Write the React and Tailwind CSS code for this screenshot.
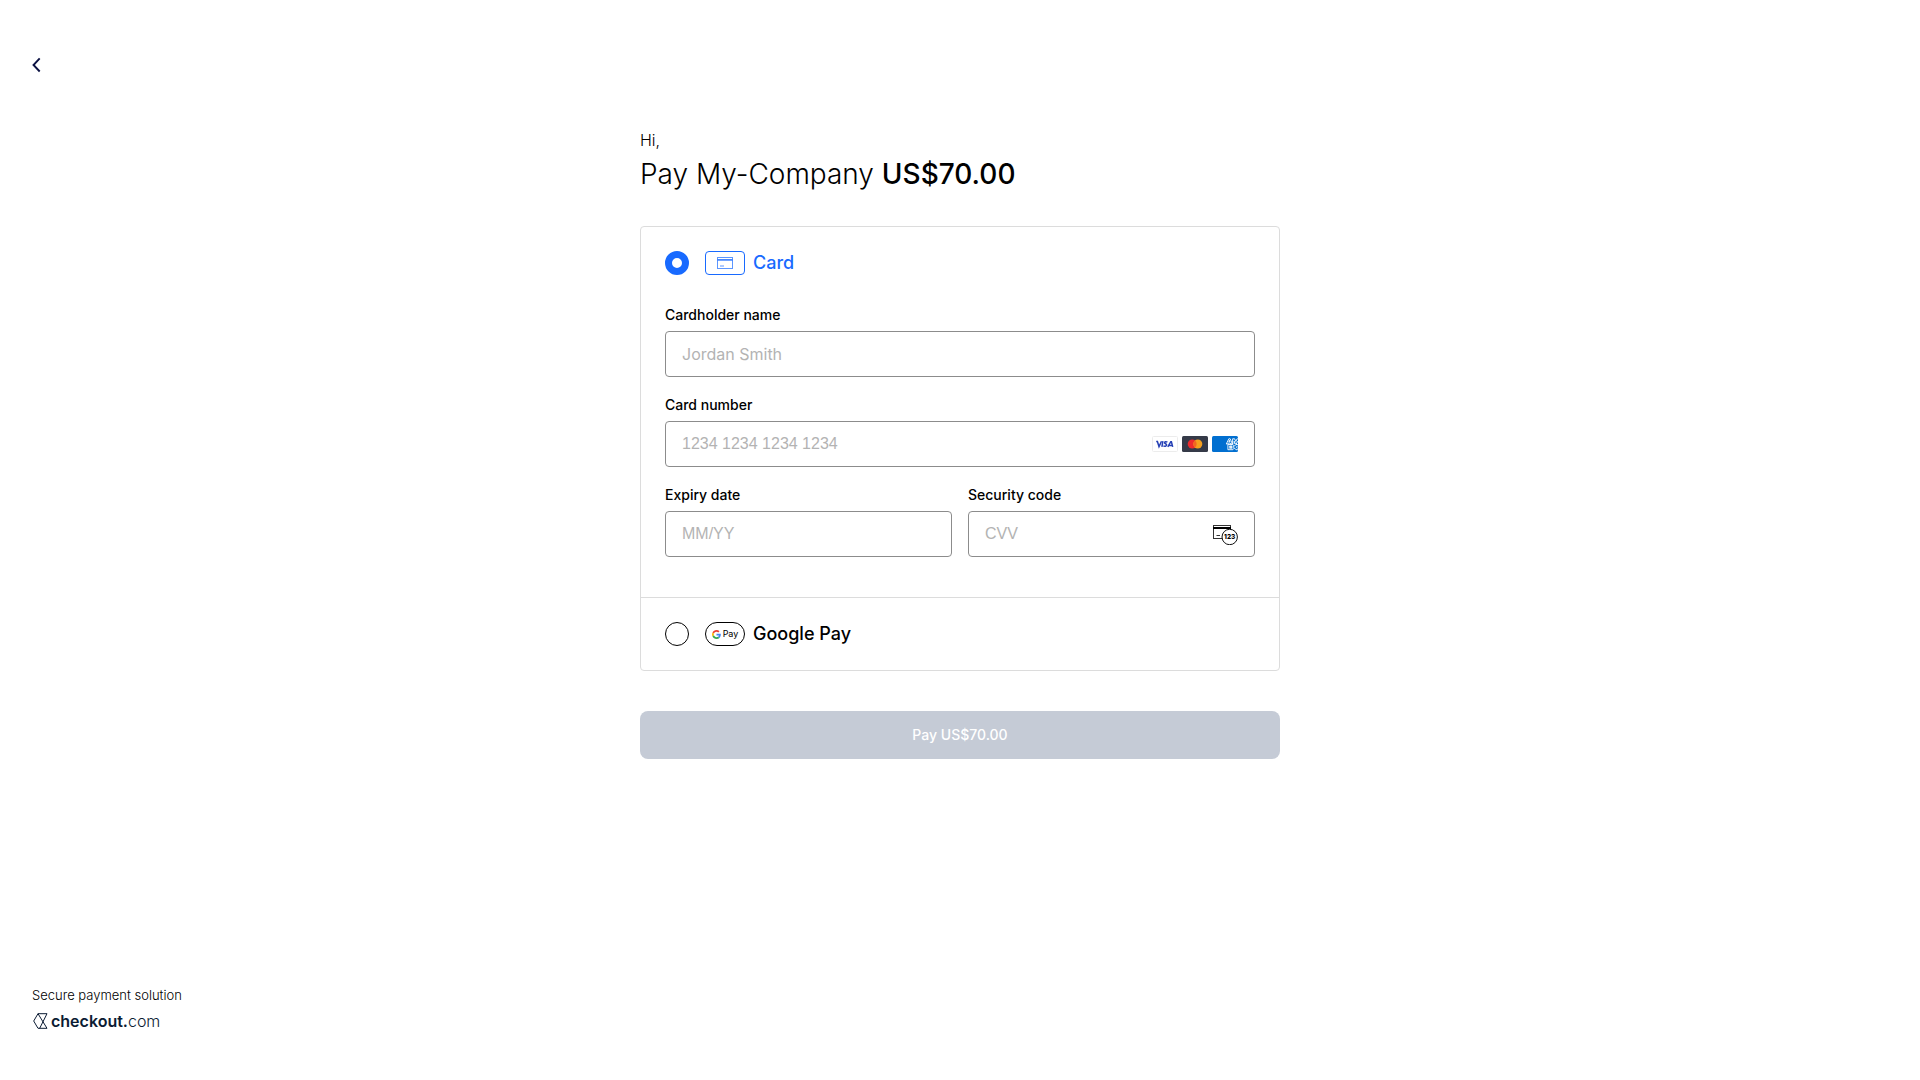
import { useState } from "react";

const labelClass = "block text-sm leading-6 font-medium text-black";
const inputClass =
  "mt-1 block h-[46px] w-full rounded border border-[#8c8c8c] bg-white px-4 text-base text-black placeholder:text-[#b3b3b3] focus:outline-none focus:border-[#186aff]";

function VisaLogo() {
  return (
    <svg width="26" height="16" viewBox="0 0 26 16" role="img" aria-label="Visa">
      <rect x="0.5" y="0.5" width="25" height="15" rx="1" fill="#fff" stroke="#ececec" />
      <g fill="none" stroke="#2540b5" strokeWidth="1.5">
        <path d="M4.2 5.6h1.2L7 10.6 9.5 5.3" />
        <path d="M10.9 5.2 9.9 10.9" />
        <path d="M15.4 6.2c-1.2-.6-2.8-.5-2.8.5 0 1.1 2.2 1 2 2.3-.2 1.3-1.9 1.5-3.2.8" />
        <path d="M15.8 10.9 18.8 5.700h.6l1.300 5.200M17 9.500h3" />
      </g>
    </svg>
  );
}

function MastercardLogo() {
  return (
    <svg width="26" height="16" viewBox="0 0 26 16" role="img" aria-label="Mastercard">
      <rect width="26" height="16" rx="1.5" fill="#353a48" />
      <circle cx="10.2" cy="8" r="4.5" fill="#ed2a2d" />
      <circle cx="15.8" cy="8" r="4.5" fill="#f59f1e" />
      <path d="M13 4.5a4.500 4.500 0 0 1 0 7 4.500 4.500 0 0 1 0-7z" fill="#f26522" />
    </svg>
  );
}

function AmexLogo() {
  return (
    <svg width="26" height="16" viewBox="0 0 26 16" role="img" aria-label="American Express">
      <rect width="26" height="16" rx="1.5" fill="#016fd0" />
      <g fill="none" stroke="#fff" strokeWidth="0.9">
        <path d="M14.3 8 16.800 2.800h1.400L20.400 8h-1.800l-.4-1h-1.900l-.4 1zM16.800 5.600l.6-1.400.6 1.400z" />
        <path d="M20.600 8V2.800h2l1.200 2.700L25 2.800h.8M22.200 8V5.200L23.400 8h.9l1.300-2.800" />
        <path d="M15.900 8.500h5l1.500 1.700 1.500-1.700h2M15.900 8.500v5.200h5l1.500-1.700 1.500 1.700h2M20.300 10h-2.800v.6h2.600v1h-2.600v.6h2.800M21.200 10.100l1 1-1 1M25.700 9.700l-1.300 1.400 1.300 1.400" />
      </g>
    </svg>
  );
}

function CvvIcon() {
  return (
    <svg width="25" height="22" viewBox="0 -2 25 22" aria-hidden="true">
      <rect x="0.5" y="0.5" width="17" height="13" fill="#fff" stroke="#333" />
      <rect x="0" y="2" width="18" height="2" fill="#000" />
      <path d="M3.500 10.500h3.500" stroke="#333" />
      <circle cx="16.700" cy="12" r="7.700" fill="#fff" stroke="#111" />
      <text
        x="16.700"
        y="14.300"
        textAnchor="middle"
        fontSize="6.500"
        fontWeight="800"
        fontFamily="Inter, sans-serif"
        fill="#000"
      >
        123
      </text>
    </svg>
  );
}

function CardIcon() {
  return (
    <span className="flex h-6 w-10 items-center justify-center rounded border border-[#186aff]">
      <svg width="16" height="12" viewBox="0 0 16 12" aria-hidden="true">
        <rect x="0.5" y="0.5" width="15" height="11" fill="none" stroke="#5c96ff" />
        <path d="M0.5 2.900h15" stroke="#186aff" strokeWidth="1.4" />
        <path d="M3 9h4" stroke="#8ab4ff" strokeWidth="1.4" />
      </svg>
    </span>
  );
}

function GooglePayIcon() {
  return (
    <span className="flex h-6 w-10 items-center justify-center gap-0.5 rounded-full border border-black">
      <svg width="9" height="9" viewBox="0 0 48 48" aria-hidden="true">
        <path
          fill="#ea4335"
          d="M24 9.500c3.540 0 6.710 1.220 9.210 3.600l6.850-6.850C35.900 2.380 30.470 0 24 0 14.620 0 6.510 5.380 2.560 13.220l7.980 6.190C12.430 13.720 17.740 9.500 24 9.500z"
        />
        <path
          fill="#4285f4"
          d="M46.980 24.550c0-1.570-.15-3.090-.38-4.550H24v9.020h12.940c-.58 2.960-2.260 5.480-4.780 7.180l7.730 6c4.510-4.180 7.090-10.360 7.090-17.650z"
        />
        <path
          fill="#fbbc05"
          d="M10.530 28.590c-.48-1.450-.76-2.990-.76-4.590s.27-3.140.76-4.590l-7.980-6.190C.92 16.460 0 20.120 0 24c0 3.880.92 7.540 2.560 10.780l7.970-6.190z"
        />
        <path
          fill="#34a853"
          d="M24 48c6.480 0 11.930-2.130 15.890-5.810l-7.730-6c-2.150 1.450-4.920 2.300-8.160 2.300-6.260 0-11.570-4.220-13.470-9.910l-7.980 6.190C6.510 42.620 14.620 48 24 48z"
        />
      </svg>
      <span className="text-[9px] leading-3 font-normal text-black">Pay</span>
    </span>
  );
}

function MethodOption({ id, label, icon, checked, onChange }) {
  return (
    <div className="flex items-center gap-4">
      <input
        type="radio"
        id={id}
        name="method"
        checked={checked}
        onChange={onChange}
        className="size-6 shrink-0 appearance-none rounded-full border border-black bg-white checked:border-[7px] checked:border-[#186aff]"
      />
      <label
        htmlFor={id}
        className={`flex items-center gap-2 text-lg leading-6 font-medium ${
          checked ? "text-[#186aff]" : "text-black"
        }`}
      >
        {icon}
        {label}
      </label>
    </div>
  );
}

function CardForm() {
  return (
    <div className="mt-7 mb-4 space-y-4">
      <div>
        <label htmlFor="name" className={labelClass}>
          Cardholder name
        </label>
        <input id="name" type="text" placeholder="Jordan Smith" className={inputClass} />
      </div>

      <div>
        <label htmlFor="number" className={labelClass}>
          Card number
        </label>
        <div className="relative">
          <input
            id="number"
            type="text"
            inputMode="numeric"
            placeholder="1234 1234 1234 1234"
            className={`${inputClass} font-['Liberation_Sans',sans-serif]`}
          />
          <div className="pointer-events-none absolute inset-y-0 right-[17px] flex items-center gap-1">
            <VisaLogo />
            <MastercardLogo />
            <AmexLogo />
          </div>
        </div>
      </div>

      <div className="grid grid-cols-2 gap-4">
        <div>
          <label htmlFor="expiry" className={labelClass}>
            Expiry date
          </label>
          <input
            id="expiry"
            type="text"
            inputMode="numeric"
            placeholder="MM/YY"
            className={`${inputClass} font-['Liberation_Sans',sans-serif]`}
          />
        </div>
        <div>
          <label htmlFor="cvv" className={labelClass}>
            Security code
          </label>
          <div className="relative">
            <input
              id="cvv"
              type="text"
              inputMode="numeric"
              placeholder="CVV"
              className={`${inputClass} font-['Liberation_Sans',sans-serif]`}
            />
            <div className="pointer-events-none absolute inset-y-0 right-[17px] flex items-center">
              <CvvIcon />
            </div>
          </div>
        </div>
      </div>
    </div>
  );
}

export default function App() {
  const [method, setMethod] = useState("card");

  return (
    <div className="flex min-h-screen flex-col bg-white font-[Inter,sans-serif] text-black">
      <header className="flex h-32 items-center px-8">
        <button type="button" aria-label="Back">
          <svg width="9" height="18" viewBox="0 0 9 18" fill="none" aria-hidden="true">
            <path d="M7.700 3.300 1.500 10l6.200 6.500" stroke="#0b1142" strokeWidth="1.900" />
          </svg>
        </button>
      </header>

      <main className="mx-auto w-full max-w-[640px] flex-1">
        <p className="text-base leading-6 font-light">Hi,</p>
        <h1 className="mt-0.5 text-[28px] leading-10 font-light">
          Pay My-Company <span className="font-medium">US$70.00</span>
        </h1>

        <form onSubmit={(e) => e.preventDefault()}>
          <div className="mt-8 rounded border border-[#dcdcdc]">
            <div className="p-6">
              <MethodOption
                id="card"
                label="Card"
                icon={<CardIcon />}
                checked={method === "card"}
                onChange={() => setMethod("card")}
              />
              {method === "card" && <CardForm />}
            </div>
            <div className="border-t border-[#dcdcdc] p-6">
              <MethodOption
                id="gpay"
                label="Google Pay"
                icon={<GooglePayIcon />}
                checked={method === "gpay"}
                onChange={() => setMethod("gpay")}
              />
            </div>
          </div>

          <button
            type="submit"
            disabled
            className="mt-10 h-12 w-full rounded-lg bg-[#c5cbd6] text-sm font-medium text-white"
          >
            Pay US$70.00
          </button>
        </form>
      </main>

      <footer className="px-8 pb-[49px]">
        <p className="text-[13px] leading-6 font-light">Secure payment solution</p>
        <a href="#" className="mt-1 flex h-5 items-center gap-[3px] text-[#0b1b33]">
          <svg width="16" height="16" viewBox="0 0 16 16" fill="none" stroke="currentColor" aria-hidden="true">
            <path d="M6 .7h9L7.700 15.300h7.300L6 .7 1.700 8 6 15.300h2" />
          </svg>
          <span className="text-base leading-5">
            <span className="font-semibold">checkout.</span>
            <span className="font-light">com</span>
          </span>
        </a>
      </footer>
    </div>
  );
}
